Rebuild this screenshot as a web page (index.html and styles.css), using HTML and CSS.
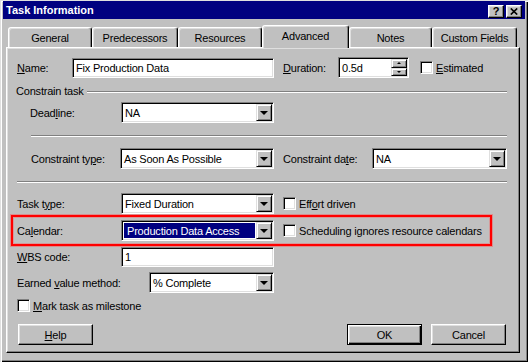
FILE: index.html
```html
<!DOCTYPE html>
<html>
<head>
<meta charset="utf-8">
<title>Task Information</title>
<link rel="stylesheet" href="styles.css">
</head>
<body>
<div class="window">
  <div class="titlebar">
    <span class="title">Task Information</span>
    <div class="caps">
      <span class="cap q">?</span>
      <span class="cap x"><svg width="8" height="7" viewBox="0 0 8 7"><path d="M0.8 0.5 L7.2 6.5 M7.2 0.5 L0.8 6.5" stroke="#000" stroke-width="1.7" fill="none"/></svg></span>
    </div>
  </div>

  <div class="tabs">
    <div class="tab t-general">General</div>
    <div class="tab t-pred">Predecessors</div>
    <div class="tab t-res">Resources</div>
    <div class="tab sel t-adv">Advanced</div>
    <div class="tab t-notes">Notes</div>
    <div class="tab t-custom">Custom Fields</div>
  </div>

  <div class="panel">
    <div class="row r-name">
      <span class="lbl l-name"><u>N</u>ame:</span>
      <div class="field f-name"><span class="val">Fix Production Data</span></div>
      <span class="lbl l-dur"><u>D</u>uration:</span>
      <div class="field spin">
        <span class="val">0.5d</span>
        <span class="spinbtns">
          <span class="sb"><i class="up"></i></span>
          <span class="sb"><i class="dn"></i></span>
        </span>
      </div>
      <span class="chk c-est"></span><span class="ctext"><u>E</u>stimated</span>
    </div>

    <div class="row r-group">
      <span class="grp">Constrain task</span>
      <span class="gline"></span>
    </div>

    <div class="row r-dead">
      <span class="lbl l-dead">Dead<u>l</u>ine:</span>
      <div class="field combo w153"><span class="val">NA</span><span class="drop"><i class="tri"></i></span></div>
    </div>

    <div class="sep s-indent"></div>

    <div class="row r-ctype">
      <span class="lbl l-ctype">Constraint ty<u>p</u>e:</span>
      <div class="field combo w154"><span class="val">As Soon As Possible</span><span class="drop"><i class="tri"></i></span></div>
      <span class="lbl l-cdate">Constraint da<u>t</u>e:</span>
      <div class="field combo w135"><span class="val">NA</span><span class="drop"><i class="tri"></i></span></div>
    </div>

    <div class="sep s-full"></div>

    <div class="row r-ttype">
      <span class="lbl l-std">Task t<u>y</u>pe:</span>
      <div class="field combo w153"><span class="val">Fixed Duration</span><span class="drop"><i class="tri"></i></span></div>
      <span class="chk c-side"></span><span class="ctext">Eff<u>o</u>rt driven</span>
    </div>

    <div class="hl">
      <span class="lbl l-std">Ca<u>l</u>endar:</span>
      <div class="field combo w153 selcombo"><span class="val">Production Data Access</span><span class="drop"><i class="tri"></i></span></div>
      <span class="chk c-side"></span><span class="ctext">Scheduling ignores resource calendars</span>
    </div>

    <div class="row r-wbs">
      <span class="lbl l-std"><u>W</u>BS code:</span>
      <div class="field f-wbs"><span class="val">1</span></div>
    </div>

    <div class="row r-ev">
      <span class="lbl l-ev">Earned <u>v</u>alue method:</span>
      <div class="field combo w125"><span class="val">% Complete</span><span class="drop"><i class="tri"></i></span></div>
    </div>

    <div class="row r-ms">
      <span class="chk"></span><span class="ctext"><u>M</u>ark task as milestone</span>
    </div>

    <div class="row r-btns">
      <span class="btn b-help"><u>H</u>elp</span>
      <span class="btn def b-ok">OK</span>
      <span class="btn b-cancel">Cancel</span>
    </div>
  </div>
</div>
</body>
</html>
```

FILE: styles.css
```css
html, body {
  margin: 0;
  padding: 0;
  background: #c0c0c0;
}

body {
  font-family: "Liberation Sans", Arial, sans-serif;
  font-size: 11px;
  letter-spacing: -0.2px;
  color: #000;
}

u { text-decoration: underline; text-underline-offset: 1px; }

.window {
  width: 528px;
  height: 362px;
  box-sizing: border-box;
  padding: 1px 3px 3px 3px;
  background: #c0c0c0;
  box-shadow: inset 1px 1px #dfdfdf, inset 2px 2px #fff, inset -1px -1px #000, inset -2px -2px #808080;
}

/* title bar */
.titlebar {
  height: 18px;
  background: #000080;
  display: flex;
  align-items: center;
  padding: 0 3px 0 3px;
}
.title {
  color: #fff;
  font-weight: bold;
  font-size: 11px;
  letter-spacing: 0;
  flex: 1;
}
.caps {
  display: flex;
  gap: 2px;
  margin-top: 3px;
}
.cap {
  width: 16px;
  height: 13px;
  box-sizing: border-box;
  background: #c0c0c0;
  border: 1px solid;
  border-color: #fff #000 #000 #fff;
  box-shadow: inset -1px -1px #808080, inset 1px 1px #dfdfdf;
  display: flex;
  align-items: center;
  justify-content: center;
}
.cap.q {
  font-weight: bold;
  font-size: 11px;
  line-height: 11px;
}

/* tabs */
.tabs {
  display: flex;
  align-items: flex-end;
  height: 22px;
  margin-top: 6px;
  padding-left: 5px;
}
.tab {
  box-sizing: border-box;
  height: 20px;
  border: 1px solid;
  border-bottom: 0;
  border-color: #fff #000 transparent #fff;
  border-radius: 3px 3px 0 0;
  box-shadow: inset -1px 0 #808080, inset 1px 1px #dfdfdf;
  display: flex;
  align-items: center;
  justify-content: center;
  padding-top: 1px;
  background: #c0c0c0;
}
.tab.sel {
  height: 23px;
  margin-bottom: -1px;
  padding-top: 0;
  padding-bottom: 2px;
  position: relative;
  z-index: 1;
}
.t-general { width: 84px; }
.t-pred { width: 86px; }
.t-res { width: 84px; }
.t-adv { width: 87px; }
.t-notes { width: 83px; }
.t-custom { width: 85px; }

/* panel */
.panel {
  margin-left: 3px;
  width: 514px;
  height: 306px;
  box-sizing: border-box;
  border: 1px solid;
  border-color: #fff #000 #000 #fff;
  box-shadow: inset -1px -1px #808080, inset 1px 1px #dfdfdf;
  padding: 0 12px 0 10px;
}

.row {
  display: flex;
  align-items: center;
  height: 21px;
}

.lbl { white-space: nowrap; }

/* sunken fields */
.field {
  box-sizing: border-box;
  height: 21px;
  border: 1px solid;
  border-color: #808080 #fff #fff #808080;
  box-shadow: inset 1px 1px #000, inset -1px -1px #dfdfdf;
  background: #fff;
  padding: 1px;
  display: flex;
  align-items: stretch;
}
.field .val {
  flex: 1;
  display: flex;
  align-items: center;
  padding-left: 2px;
  white-space: nowrap;
  overflow: hidden;
}

.combo .drop {
  width: 16px;
  box-sizing: border-box;
  background: #c0c0c0;
  border: 1px solid;
  border-color: #dfdfdf #000 #000 #dfdfdf;
  box-shadow: inset 1px 1px #fff, inset -1px -1px #808080;
  display: flex;
  align-items: center;
  justify-content: center;
}
.tri {
  display: block;
  width: 0;
  height: 0;
  border-left: 4px solid transparent;
  border-right: 4px solid transparent;
  border-top: 4px solid #000;
  margin-top: 1px;
}

.selcombo .val {
  background: #000080;
  color: #fff;
  margin: 1px 1px 1px 1px;
  padding-left: 3px;
}

/* spinner */
.spin { width: 71px; }
.spinbtns {
  width: 16px;
  display: flex;
  flex-direction: column;
}
.sb {
  flex: 1;
  box-sizing: border-box;
  background: #c0c0c0;
  border: 1px solid;
  border-color: #dfdfdf #000 #000 #dfdfdf;
  box-shadow: inset 1px 1px #fff, inset -1px -1px #808080;
  display: flex;
  align-items: center;
  justify-content: center;
}
.sb i {
  display: block;
  width: 0;
  height: 0;
  border-left: 2px solid transparent;
  border-right: 2px solid transparent;
}
.sb .up { border-bottom: 2px solid #000; }
.sb .dn { border-top: 2px solid #000; }

/* checkbox */
.chk {
  width: 13px;
  height: 13px;
  box-sizing: border-box;
  background: #fff;
  border: 1px solid;
  border-color: #808080 #fff #fff #808080;
  box-shadow: inset 1px 1px #000, inset -1px -1px #dfdfdf;
  flex: none;
}
.ctext {
  margin-left: 3px;
  white-space: nowrap;
}

/* row specifics */
.r-name { margin-top: 9px; }
.l-name { width: 55px; }
.f-name { width: 202px; height: 20px; align-self: flex-end; }
.l-dur { width: 55px; margin-left: 9px; }
.c-est { margin-left: 11px; }

.r-group { margin-top: 6px; height: 14px; }
.grp { margin-left: -1px; white-space: nowrap; }
.gline {
  flex: 1;
  height: 0;
  border-top: 1px solid #808080;
  border-bottom: 1px solid #fff;
  margin-left: 3px;
  margin-top: 2px;
}

.r-dead { margin-top: 4px; }
.l-dead { margin-left: 13px; width: 91px; }
.w153 { width: 153px; }
.w154 { width: 154px; }
.w135 { width: 135px; }
.w125 { width: 125px; }

.sep {
  height: 0;
  border-top: 1px solid #808080;
  border-bottom: 1px solid #fff;
  margin-top: 12px;
}
.s-indent { margin-left: 14px; }

.r-ctype { margin-top: 11px; }
.l-ctype { margin-left: 14px; width: 89px; }
.l-cdate { margin-left: 9px; width: 89px; }

.r-ttype { margin-top: 10px; }
.l-std { width: 104px; }
.c-side { margin-left: 9px; }

.hl {
  display: flex;
  align-items: center;
  box-sizing: border-box;
  width: 481px;
  height: 31px;
  margin: 1px 0 0 -6px;
  padding-left: 4px;
  border: 2px solid #ff0000;
  box-shadow: 0 0 0 1px rgba(255, 80, 80, 0.45), inset 0 0 0 1px rgba(255, 80, 80, 0.35);
}

.r-wbs { margin-top: 1px; height: 20px; }
.f-wbs { width: 153px; height: 20px; }

.r-ev { margin-top: 5px; }
.l-ev { width: 132px; }

.r-ms { margin-top: 6px; height: 13px; }

/* buttons */
.r-btns { margin-top: 12px; }
.btn {
  box-sizing: border-box;
  width: 75px;
  height: 21px;
  background: #c0c0c0;
  border: 1px solid;
  border-color: #fff #000 #000 #fff;
  box-shadow: inset -1px -1px #808080, inset 1px 1px #dfdfdf;
  display: flex;
  align-items: center;
  justify-content: center;
}
.btn.def {
  border: 1px solid #000;
  box-shadow: inset 1px 1px #fff, inset -1px -1px #000, inset -2px -2px #808080, inset 2px 2px #dfdfdf;
}
.b-help { margin-left: 1px; }
.b-ok { margin-left: auto; }
.b-cancel { margin-left: 9px; margin-right: 1px; }
```
